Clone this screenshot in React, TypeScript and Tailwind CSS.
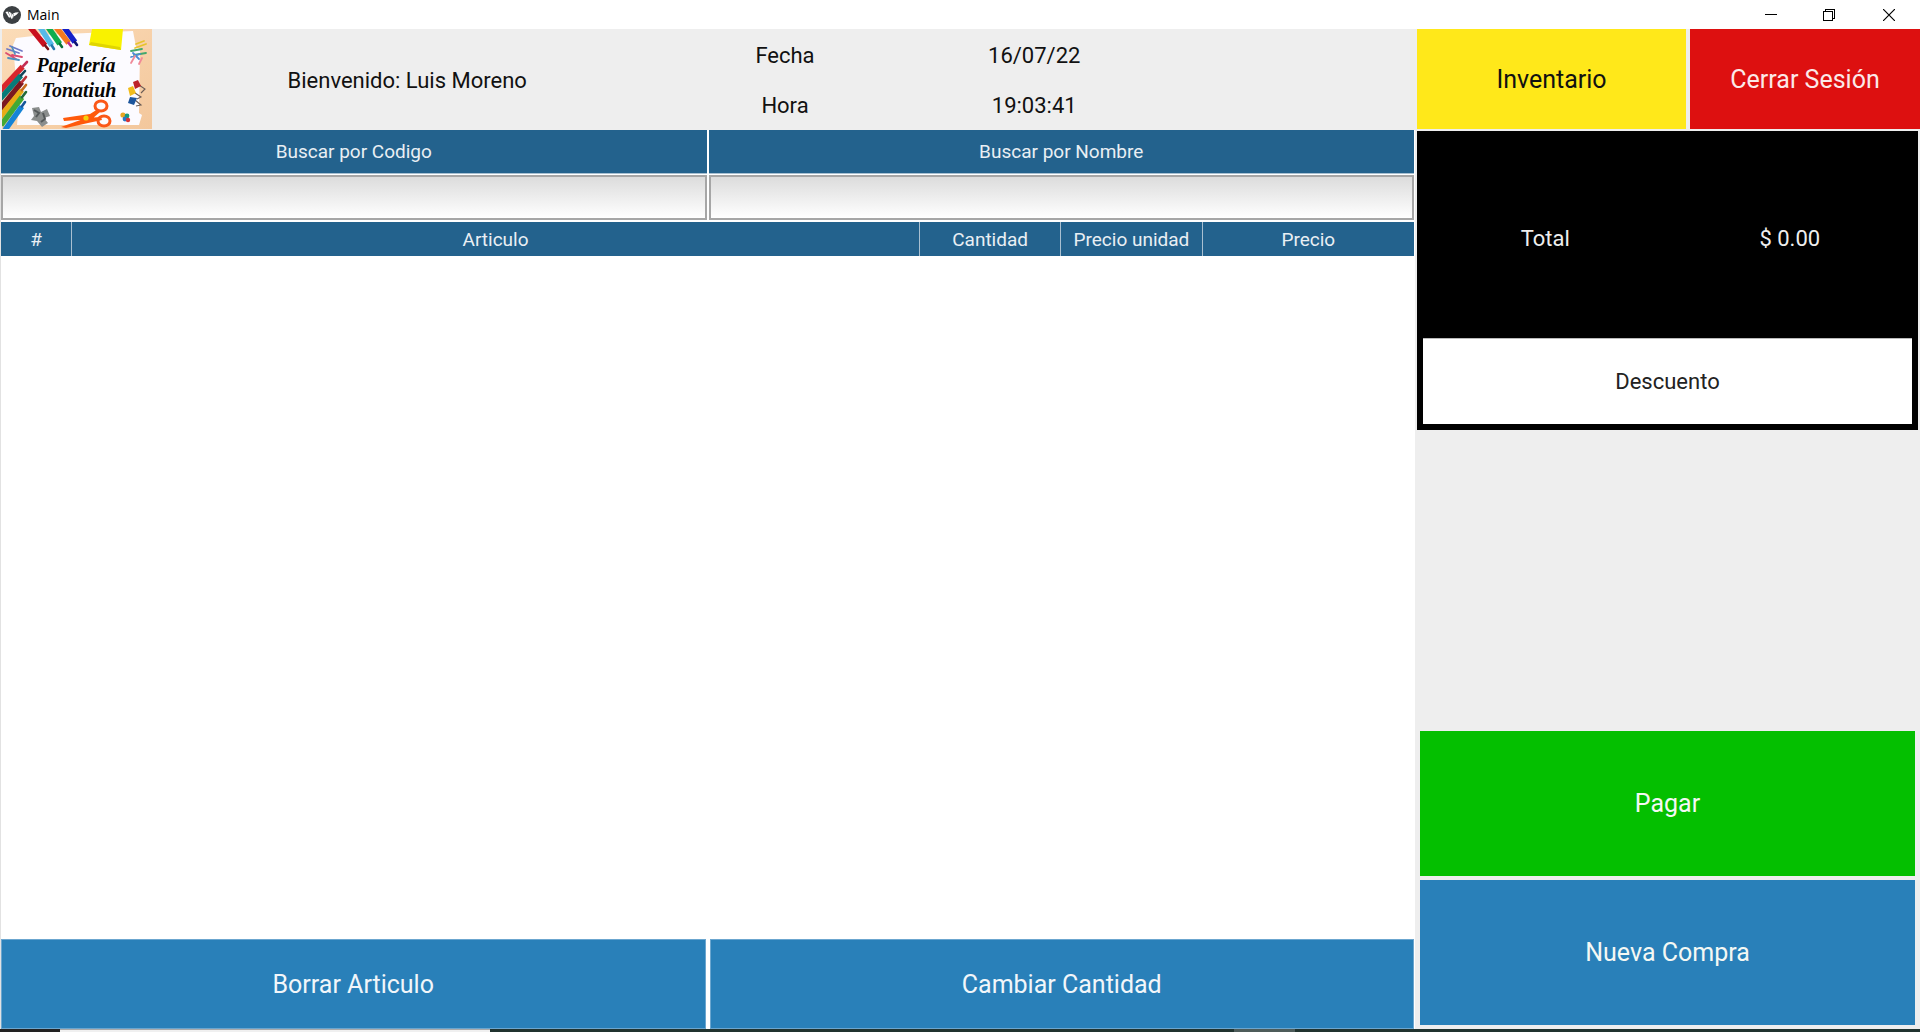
import { useState } from "react";

const COLUMNS = [
  { label: "#", width: "w-[5%]" },
  { label: "Articulo", width: "w-[60%]" },
  { label: "Cantidad", width: "w-[10%]" },
  { label: "Precio unidad", width: "w-[10%]" },
  { label: "Precio", width: "w-[15%]" },
];

function AppIcon() {
  return (
    <svg viewBox="0 0 18 18" className="size-[18px]" aria-hidden="true">
      <circle cx="9" cy="9" r="9" fill="#3c4043" />
      <path d="M2.4 6 4.6 5.4 7.2 10.6 6.2 12ZM5.4 5.6 7.6 6.4 9.2 11 8.8 13.2 7.6 11.6ZM8.3 6.8 10.8 9.4 9.7 13ZM10 7.4 12.4 6.6 15.8 6.2 13.8 8.4 11.3 10.2Z" fill="#fff" />
    </svg>
  );
}

function TitleBar() {
  return (
    <div className="flex h-[29px] shrink-0 items-center justify-between bg-white pl-[3px]">
      <div className="flex items-center gap-[6px]">
        <AppIcon />
        <span className="font-['Open_Sans','Noto_Sans',sans-serif] text-sm text-black">Main</span>
      </div>
      <div className="flex h-full">
        <button aria-label="Minimizar" className="grid w-[58px] place-items-center">
          <svg width="12" height="12" viewBox="0 0 12 12" shapeRendering="crispEdges" aria-hidden="true">
            <path d="M0 5.5H12" stroke="#000" />
          </svg>
        </button>
        <button aria-label="Restaurar" className="grid w-[58px] place-items-center">
          <svg width="12" height="12" viewBox="0 0 12 12" shapeRendering="crispEdges" fill="none" stroke="#000" aria-hidden="true">
            <path d="M.5 2.5H9.5V11.5H.5ZM2.5 2.5V.5H11.5V9.5H9.5" />
          </svg>
        </button>
        <button aria-label="Cerrar" className="grid w-[62px] place-items-center">
          <svg width="12" height="12" viewBox="0 0 12 12" stroke="#000" strokeWidth="1.2" aria-hidden="true">
            <path d="M0 0 12 12M12 0 0 12" />
          </svg>
        </button>
      </div>
    </div>
  );
}

function Pencil({ from, to, color, tip }: { from: [number, number]; to: [number, number]; color: string; tip: string }) {
  const mx = from[0] + (to[0] - from[0]) * 0.84;
  const my = from[1] + (to[1] - from[1]) * 0.84;
  return (
    <g>
      <line x1={from[0]} y1={from[1]} x2={mx} y2={my} stroke={color} strokeWidth="5.5" />
      <line x1={mx} y1={my} x2={to[0]} y2={to[1]} stroke={tip} strokeWidth="2.6" strokeLinecap="round" />
    </g>
  );
}

function Logo() {
  return (
    <svg viewBox="0 0 150 100" className="h-[100px] w-[150px] shrink-0" role="img" aria-label="Papelería Tonatiuh">
      <defs>
        <linearGradient id="wood" x1="0" y1="0" x2="1" y2="1">
          <stop offset="0" stopColor="#fbdcb8" />
          <stop offset="1" stopColor="#f3c79c" />
        </linearGradient>
      </defs>
      <rect width="150" height="100" fill="url(#wood)" />
      <path d="M14 9 40 6 131 2 134 18 138 20 137 84 140 86 137 96 15 96 16 85 12 84 14 50 11 16Z" fill="#fcfbff" />
      <Pencil from={[28, -2]} to={[46, 20]} color="#c80f1e" tip="#7c1016" />
      <Pencil from={[38, -2]} to={[52, 20]} color="#56b9e8" tip="#2478ad" />
      <Pencil from={[46, -2]} to={[60, 18]} color="#10ad4e" tip="#087235" />
      <Pencil from={[54, -2]} to={[69, 17]} color="#f5791f" tip="#b72b8b" />
      <Pencil from={[62, -2]} to={[75, 16]} color="#1420c9" tip="#101470" />
      <path d="M90 0H121L119 21 87 16Z" fill="#f9f200" />
      <path d="M87 16 119 21 118 18 89 13Z" fill="#e0d500" />
      <Pencil from={[-2, 62]} to={[25, 33]} color="#d8252c" tip="#c42d54" />
      <Pencil from={[-2, 70]} to={[23, 42]} color="#087b79" tip="#15465a" />
      <Pencil from={[-2, 80]} to={[24, 48]} color="#7b1820" tip="#bb3238" />
      <Pencil from={[-2, 88]} to={[24, 56]} color="#e9ab16" tip="#c86d1d" />
      <Pencil from={[-1, 96]} to={[24, 63]} color="#43a933" tip="#246938" />
      <Pencil from={[3, 101]} to={[23, 73]} color="#1684d6" tip="#16569b" />
      <g fill="none" strokeWidth="1.8" strokeLinecap="round">
        <path d="M5 20 17 24M8 17 20 22" stroke="#6f79c5" />
        <path d="M4 24 14 30M10 26 20 28" stroke="#db4d70" />
        <path d="M6 29 17 31M10 18 13 25" stroke="#4f91bf" />
        <path d="M134 15 142 12M133 19 144 15" stroke="#e8c32b" />
        <path d="M129 22 140 20M132 26 144 24" stroke="#43a86c" />
        <path d="M129 28 138 25M131 24 137 30" stroke="#4c8bd7" />
        <path d="M129 34 133 27M137 35 140 29" stroke="#f08a98" />
      </g>
      <g fill="none" stroke="#6b5c55" strokeWidth="1.1">
        <path d="M137 56 143 60 139 64M133 64 139 68 135 70M133 71 139 76 134 77" />
      </g>
      <path d="M131 53 136 51 139 57 133 60Z" fill="#bd2229" />
      <path d="M126 59 131 57 134 64 128 67Z" fill="#f1bc1b" />
      <path d="M128 68 135 69 132 76 126 74Z" fill="#1c559c" />
      <path d="M30 79 37 78 39 83 45 80 48 87 42 89 46 94 40 98 35 92 29 91 32 87Z" fill="#8b8e8d" />
      <path d="M32 81 37 84 34 88M41 84 43 90 39 93" fill="none" stroke="#55595a" strokeWidth="2" />
      <path d="M61 89 88 85 96 80 98 83 90 90 62 92ZM59 98 84 89 99 88 100 91 86 94 64 99Z" fill="#ff5a0c" />
      <ellipse cx="99" cy="77" rx="6" ry="5" fill="none" stroke="#fb5718" strokeWidth="3" />
      <ellipse cx="102" cy="92" rx="6" ry="5" fill="none" stroke="#fb5718" strokeWidth="3" />
      <circle cx="84" cy="89" r="2.6" fill="#f5cf0c" />
      <circle cx="121" cy="86" r="2.6" fill="#e7a522" />
      <circle cx="125" cy="87" r="2.4" fill="#169777" />
      <circle cx="123" cy="90" r="2.4" fill="#2877c4" />
      <circle cx="126" cy="91" r="2.2" fill="#d63437" />
      <g fill="#050505" className="font-['Liberation_Serif',serif] text-[20px] font-bold italic" textAnchor="middle">
        <text x="74" y="43">Papelería</text>
        <text x="77" y="68">Tonatiuh</text>
      </g>
    </svg>
  );
}

function Header() {
  return (
    <header className="flex h-[101px] shrink-0 bg-[#eeeeee] pl-[2px] text-[22px] text-[#111]">
      <Logo />
      <div className="grid flex-1 grid-cols-[510fr_245fr_253fr_254fr] pt-[2px] text-center">
        <div className="self-center">Bienvenido: Luis Moreno</div>
        <div className="grid grid-rows-2 items-center">
          <span>Fecha</span>
          <span>Hora</span>
        </div>
        <div className="grid grid-rows-2 items-center">
          <span>16/07/22</span>
          <span>19:03:41</span>
        </div>
      </div>
    </header>
  );
}

function Search({ id, label }: { id: string; label: string }) {
  const [value, setValue] = useState("");
  return (
    <div className="flex flex-1 flex-col">
      <label htmlFor={id} className="grid h-[44px] place-items-center border-b border-[#a9c0d1] bg-[#23628d] pt-[2px] text-[19px] text-[#e9eff4]">
        {label}
      </label>
      <input
        id={id}
        value={value}
        onChange={(e) => setValue(e.target.value)}
        className="mt-px h-[45px] w-full border-2 border-[#a6a6a6] bg-linear-to-b from-[#dcdcdc] to-white px-2 text-[19px] text-black outline-none"
      />
    </div>
  );
}

function Articles() {
  return (
    <div className="mt-[2px] flex-1">
      <table className="w-full table-fixed border-collapse">
        <thead>
          <tr className="h-[34px] bg-[#23628d] text-[19px] text-[#e9eff4]">
            {COLUMNS.map((c) => (
              <th key={c.label} scope="col" className={`${c.width} border-r border-[#a9c0d1] p-0 pt-[2px] font-normal whitespace-nowrap last:border-r-0`}>
                {c.label}
              </th>
            ))}
          </tr>
        </thead>
      </table>
    </div>
  );
}

export default function App() {
  return (
    <div className="flex h-screen flex-col bg-white font-[Roboto,sans-serif]">
      <TitleBar />
      <div className="flex min-h-0 flex-1">
        <main className="flex flex-1 flex-col">
          <Header />
          <div className="flex min-h-0 flex-1 flex-col border-l border-[#e2e2e2] pr-px">
            <div className="flex gap-[2px]">
              <Search id="codigo" label="Buscar por Codigo" />
              <Search id="nombre" label="Buscar por Nombre" />
            </div>
            <Articles />
            <div className="flex h-[90px] shrink-0 gap-1 text-[25px] text-[#f1f6fa]">
              <button className="flex-1 border border-[#6ba6cf] bg-[#2980b9] pt-px">Borrar Articulo</button>
              <button className="flex-1 border border-[#6ba6cf] bg-[#2980b9] pt-px">Cambiar Cantidad</button>
            </div>
          </div>
        </main>
        <aside className="flex w-[505px] shrink-0 flex-col bg-[#eeeeee] pl-[2px]">
          <div className="flex h-[100px] shrink-0 gap-1 text-[25px]">
            <button className="w-[269px] bg-[#ffe81a] pt-[2px] text-[#111]">Inventario</button>
            <button className="flex-1 bg-[#dd1010] pt-[2px] text-[#fbe9e9]">Cerrar Sesión</button>
          </div>
          <section className="mt-[2px] mr-[2px] flex h-[299px] shrink-0 flex-col bg-black p-[6px] text-[22px] text-[#eee]">
            <div className="grid flex-1 grid-cols-2 place-items-center pt-[2px]">
              <span>Total</span>
              <output>$ 0.00</output>
            </div>
            <button className="h-[86px] border-t border-[#bbb] bg-white text-[#222]">Descuento</button>
          </section>
          <div className="mt-auto mr-[5px] mb-[4px] ml-[3px] flex flex-col gap-1 text-[25px] text-[#f4f8f4]">
            <button className="h-[145px] bg-[#04bf00]">Pagar</button>
            <button className="h-[145px] bg-[#2980b9]">Nueva Compra</button>
          </div>
        </aside>
      </div>
      <div className="flex h-[3px] shrink-0 bg-[#20332f]">
        <div className="w-[60px] bg-[#222]" />
        <div className="w-[430px] border-t border-[#aaa] bg-[#f0f0f0]" />
        <div className="ml-[744px] w-[61px] bg-[#4d5c5a]" />
      </div>
    </div>
  );
}
